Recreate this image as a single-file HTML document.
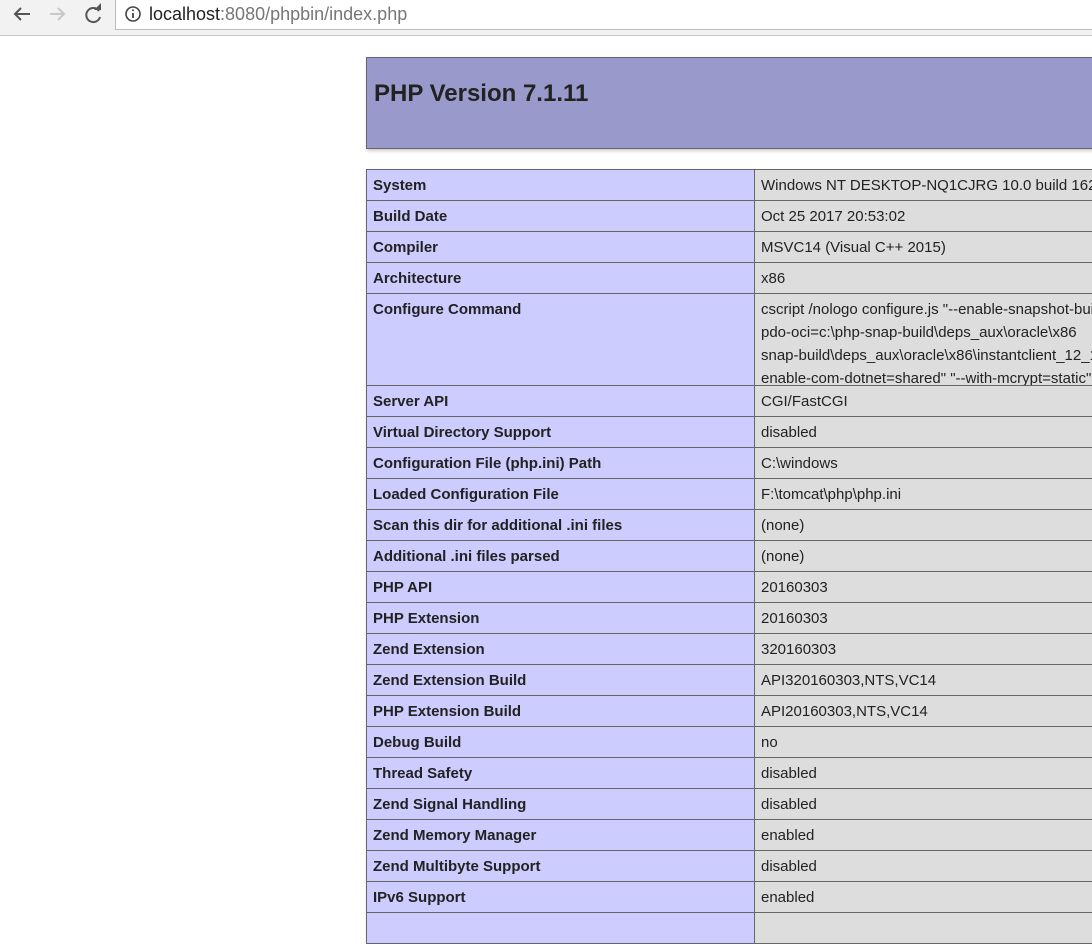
<!DOCTYPE html>
<html><head><meta charset="utf-8"><style>
*{margin:0;padding:0;box-sizing:border-box}
body{width:1092px;height:920px;overflow:hidden;background:#fff;font-family:"Liberation Sans",sans-serif;position:relative}
.bar{position:absolute;left:0;top:0;width:1092px;height:36px;background:#f2f2f2;border-bottom:1px solid #c8c8c8}
.addr{position:absolute;left:115px;top:0;width:990px;height:30px;background:#fff;border:1px solid #bbb;border-top:none}
.url{position:absolute;left:149px;top:4px;font-size:18px;color:#222}
.url span{color:#777}
.hdr{position:absolute;left:366px;top:57px;width:740px;height:92px;background:#9999cc;border:1px solid #666;box-shadow:1px 2px 3px #ccc}
.hdr h1{position:absolute;left:7px;top:22px;font-size:24px;font-weight:bold;color:#222}
table{position:absolute;left:366px;top:169px;border-collapse:collapse;width:800px;box-shadow:1px 2px 3px #ccc}
td{border:1px solid #666;font-size:15px;color:#222;padding:0 6px;height:31px;vertical-align:middle;white-space:nowrap;overflow:hidden}
td.e{background:#ccccff;font-weight:bold;width:388px}
td.v{background:#dddddd}
tr.c td{height:auto;vertical-align:top;padding:0 6px}
tr.c td div{height:91px;padding-top:4px;line-height:23px;overflow:hidden}
</style></head><body>
<div class="bar">
<svg width="110" height="36" style="position:absolute;left:0;top:0">
<path d="M30 14H15M21 8l-6 6 6 6" stroke="#555" stroke-width="2" fill="none"/>
<path d="M50 14h14M58 8l6 6-6 6" stroke="#c8c8c8" stroke-width="2" fill="none"/>
<path d="M99 11a7 7 0 1 0 1 6" stroke="#555" stroke-width="2" fill="none"/><path d="M94 10h7V3z" fill="#555"/>
</svg>
<div class="addr"></div>
<svg width="20" height="20" style="position:absolute;left:124px;top:5px"><circle cx="9" cy="9" r="7" stroke="#444" stroke-width="1.6" fill="none"/><path d="M9 8v5" stroke="#444" stroke-width="1.8"/><circle cx="9" cy="5.3" r="1" fill="#444"/></svg>
<div class="url">localhost<span>:8080/phpbin/index.php</span></div>
</div>
<div class="hdr"><h1>PHP Version 7.1.11</h1></div>
<table>
<tr><td class="e">System</td><td class="v">Windows NT DESKTOP-NQ1CJRG 10.0 build 16299</td></tr>
<tr><td class="e">Build Date</td><td class="v">Oct 25 2017 20:53:02</td></tr>
<tr><td class="e">Compiler</td><td class="v">MSVC14 (Visual C++ 2015)</td></tr>
<tr><td class="e">Architecture</td><td class="v">x86</td></tr>
<tr class="c"><td class="e"><div>Configure Command</div></td><td class="v"><div>cscript /nologo configure.js "--enable-snapshot-build"<br>pdo-oci=c:\php-snap-build\deps_aux\oracle\x86<br>snap-build\deps_aux\oracle\x86\instantclient_12_1<br>enable-com-dotnet=shared" "--with-mcrypt=static"</div></td></tr>
<tr><td class="e">Server API</td><td class="v">CGI/FastCGI</td></tr>
<tr><td class="e">Virtual Directory Support</td><td class="v">disabled</td></tr>
<tr><td class="e">Configuration File (php.ini) Path</td><td class="v">C:\windows</td></tr>
<tr><td class="e">Loaded Configuration File</td><td class="v">F:\tomcat\php\php.ini</td></tr>
<tr><td class="e">Scan this dir for additional .ini files</td><td class="v">(none)</td></tr>
<tr><td class="e">Additional .ini files parsed</td><td class="v">(none)</td></tr>
<tr><td class="e">PHP API</td><td class="v">20160303</td></tr>
<tr><td class="e">PHP Extension</td><td class="v">20160303</td></tr>
<tr><td class="e">Zend Extension</td><td class="v">320160303</td></tr>
<tr><td class="e">Zend Extension Build</td><td class="v">API320160303,NTS,VC14</td></tr>
<tr><td class="e">PHP Extension Build</td><td class="v">API20160303,NTS,VC14</td></tr>
<tr><td class="e">Debug Build</td><td class="v">no</td></tr>
<tr><td class="e">Thread Safety</td><td class="v">disabled</td></tr>
<tr><td class="e">Zend Signal Handling</td><td class="v">disabled</td></tr>
<tr><td class="e">Zend Memory Manager</td><td class="v">enabled</td></tr>
<tr><td class="e">Zend Multibyte Support</td><td class="v">disabled</td></tr>
<tr><td class="e">IPv6 Support</td><td class="v">enabled</td></tr>
<tr><td class="e">&nbsp;</td><td class="v">&nbsp;</td></tr>
</table>
</body></html>
